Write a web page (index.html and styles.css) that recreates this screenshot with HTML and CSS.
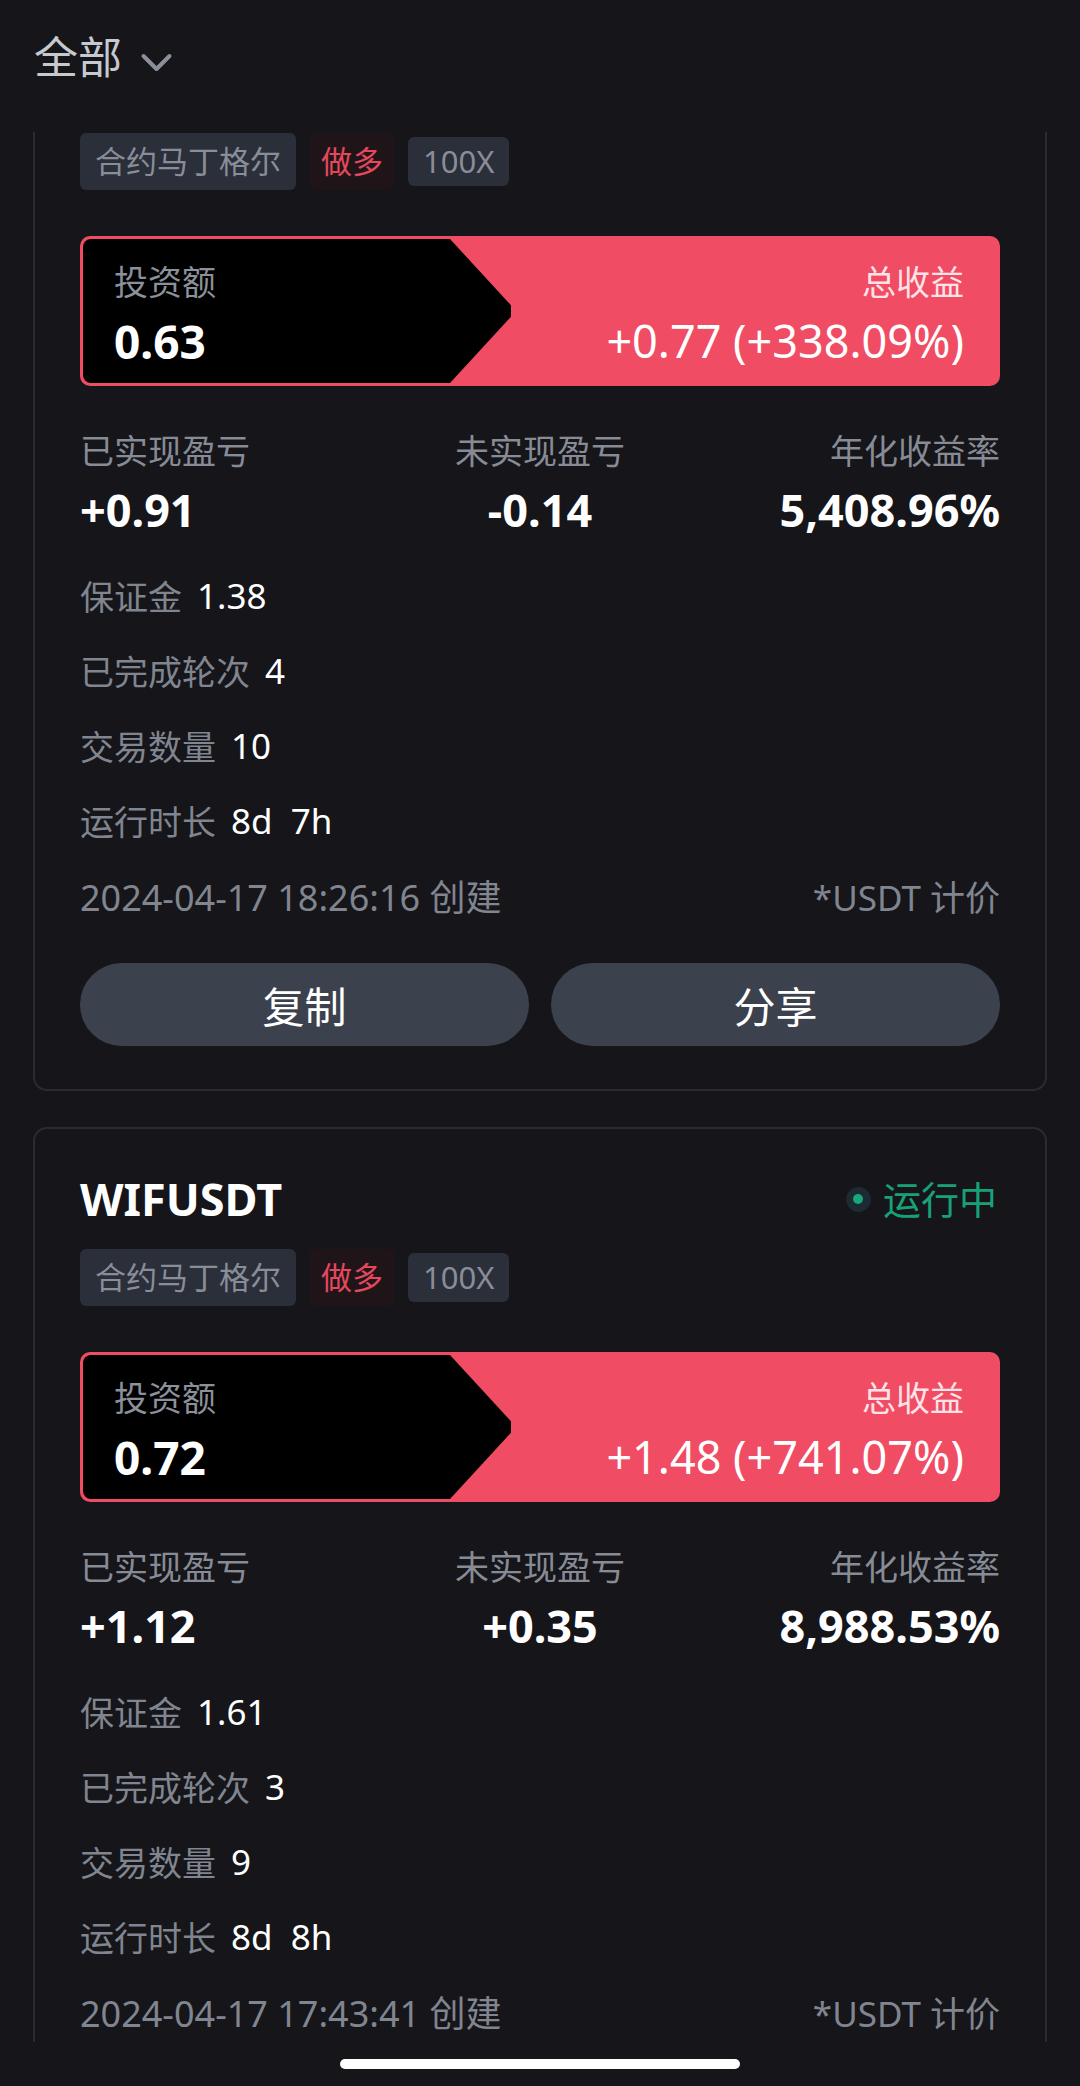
FILE: index.html
```html
<!DOCTYPE html>
<html lang="zh-CN">
<head>
<meta charset="utf-8">
<title>策略列表</title>
<link rel="stylesheet" href="styles.css">
</head>
<body>
<div class="screen">
  <header class="topbar">
    <span class="filter">全部</span>
    <svg class="chev" viewBox="0 0 32 20" aria-hidden="true"><polyline points="3,3 16,16 29,3" fill="none" stroke="#8b8f99" stroke-width="4" stroke-linecap="round" stroke-linejoin="round"/></svg>
  </header>

  <main class="list">
    <div class="list-inner">
      <section class="card card-scrolled">
        <div class="tags">
          <span class="tag">合约马丁格尔</span>
          <span class="tag tag-long">做多</span>
          <span class="tag tag-lev">100X</span>
        </div>
        <div class="pnl-box">
          <div class="invest">
            <div class="invest-label">投资额</div>
            <div class="invest-value">0.63</div>
          </div>
          <div class="profit">
            <div class="profit-label">总收益</div>
            <div class="profit-value">+0.77 (+338.09%)</div>
          </div>
        </div>
        <div class="stats">
          <div class="stat"><div class="stat-label">已实现盈亏</div><div class="stat-value">+0.91</div></div>
          <div class="stat"><div class="stat-label">未实现盈亏</div><div class="stat-value">-0.14</div></div>
          <div class="stat"><div class="stat-label">年化收益率</div><div class="stat-value">5,408.96%</div></div>
        </div>
        <div class="details">
          <div class="row"><span class="row-label">保证金</span><span class="row-value">1.38</span></div>
          <div class="row"><span class="row-label">已完成轮次</span><span class="row-value">4</span></div>
          <div class="row"><span class="row-label">交易数量</span><span class="row-value">10</span></div>
          <div class="row"><span class="row-label">运行时长</span><span class="row-value">8d&nbsp; 7h</span></div>
          <div class="row row-meta"><span class="created">2024-04-17 18:26:16 创建</span><span>*USDT 计价</span></div>
        </div>
        <div class="actions">
          <div class="btn">复制</div>
          <div class="btn">分享</div>
        </div>
      </section>

      <section class="card">
        <div class="card-head">
          <span class="pair">WIFUSDT</span>
          <span class="status"><i class="dot"></i>运行中</span>
        </div>
        <div class="tags">
          <span class="tag">合约马丁格尔</span>
          <span class="tag tag-long">做多</span>
          <span class="tag tag-lev">100X</span>
        </div>
        <div class="pnl-box">
          <div class="invest">
            <div class="invest-label">投资额</div>
            <div class="invest-value">0.72</div>
          </div>
          <div class="profit">
            <div class="profit-label">总收益</div>
            <div class="profit-value">+1.48 (+741.07%)</div>
          </div>
        </div>
        <div class="stats">
          <div class="stat"><div class="stat-label">已实现盈亏</div><div class="stat-value">+1.12</div></div>
          <div class="stat"><div class="stat-label">未实现盈亏</div><div class="stat-value">+0.35</div></div>
          <div class="stat"><div class="stat-label">年化收益率</div><div class="stat-value">8,988.53%</div></div>
        </div>
        <div class="details">
          <div class="row"><span class="row-label">保证金</span><span class="row-value">1.61</span></div>
          <div class="row"><span class="row-label">已完成轮次</span><span class="row-value">3</span></div>
          <div class="row"><span class="row-label">交易数量</span><span class="row-value">9</span></div>
          <div class="row"><span class="row-label">运行时长</span><span class="row-value">8d&nbsp; 8h</span></div>
          <div class="row row-meta"><span class="created">2024-04-17 17:43:41 创建</span><span>*USDT 计价</span></div>
        </div>
      </section>
    </div>
  </main>

  <footer class="homebar"><span class="indicator"></span></footer>
</div>
</body>
</html>
```

FILE: styles.css
```css
* { box-sizing: border-box; }

body {
  margin: 0;
  background: #15151a;
  font-family: "Noto Sans", "Noto Sans CJK SC", sans-serif;
}

.screen {
  width: 1080px;
  height: 2086px;
  display: flex;
  flex-direction: column;
  overflow: hidden;
  background: #15151a;
}

.topbar {
  height: 132px;
  flex: none;
  display: flex;
  align-items: flex-start;
  padding: 27px 0 0 34px;
}

.filter {
  font-size: 44px;
  line-height: 60px;
  color: #c6c9cf;
}

.chev {
  width: 33px;
  height: 20px;
  margin: 26px 0 0 18px;
}

.list {
  height: 1910px;
  flex: none;
  overflow: hidden;
  padding: 0 33px;
}

.list-inner {
  margin-top: -62px;
  display: flex;
  flex-direction: column;
  gap: 36px;
}

.card {
  border: 2px solid #2a2c35;
  border-radius: 14px;
  padding: 40px 45px 43px;
}

.card-head {
  height: 60px;
  margin-bottom: 20px;
  display: flex;
  justify-content: space-between;
  align-items: center;
}

.pair {
  font-size: 45px;
  font-weight: 700;
  line-height: 60px;
  color: #ffffff;
}

.status {
  display: flex;
  align-items: center;
  gap: 12px;
  font-size: 38px;
  line-height: 50px;
  color: #18a178;
  margin-right: 3px;
}

.dot {
  width: 25px;
  height: 25px;
  border-radius: 50%;
  background: #1c2a31;
  display: flex;
  align-items: center;
  justify-content: center;
}

.dot::after {
  content: "";
  width: 10px;
  height: 10px;
  border-radius: 50%;
  background: #17a77a;
}

.card-scrolled .tags {
  margin-top: 21px;
}

.tags {
  display: flex;
  align-items: center;
  gap: 13px;
}

.tag {
  font-size: 31px;
  line-height: 57px;
  padding: 0 15px;
  border-radius: 6px;
  background: #2b2f3a;
  color: #888d98;
}

.tag-long {
  background: #1f1519;
  color: #e4485d;
  padding: 0 12px;
}

.tag-lev {
  line-height: 49px;
  padding: 0 15px;
}

.pnl-box {
  margin-top: 46px;
  height: 150px;
  background: #f04c63;
  border-radius: 10px;
  padding: 3px;
  display: flex;
}

.invest {
  width: 430px;
  flex: none;
  background: #000000;
  border-radius: 8px 0 0 8px;
  clip-path: polygon(0 0, 367px 0, 428px 46%, 428px 54%, 367px 100%, 0 100%);
  padding: 20px 0 0 31px;
}

.invest-label {
  font-size: 34px;
  line-height: 46px;
  color: #8c909a;
}

.invest-value {
  font-size: 46px;
  font-weight: 700;
  line-height: 60px;
  margin-top: 6px;
  color: #ffffff;
}

.profit {
  flex: 1;
  text-align: right;
  padding: 20px 33px 0 0;
}

.profit-label {
  font-size: 34px;
  line-height: 46px;
  color: #fde3e7;
}

.profit-value {
  font-size: 45px;
  line-height: 60px;
  margin-top: 6px;
  color: #ffffff;
}

.stats {
  display: grid;
  grid-template-columns: 1fr 1fr 1fr;
  margin-top: 42px;
}

.stat:nth-child(2) { text-align: center; }
.stat:nth-child(3) { text-align: right; }

.stat-label {
  font-size: 34px;
  line-height: 46px;
  color: #878b95;
}

.stat-value {
  font-size: 45px;
  font-weight: 700;
  line-height: 60px;
  margin-top: 6px;
  color: #ffffff;
}

.details {
  margin-top: 18px;
}

.row {
  height: 75px;
  display: flex;
  align-items: center;
}

.row-label {
  font-size: 34px;
  color: #80858f;
}

.row-value {
  font-size: 35px;
  color: #ffffff;
  margin-left: 15px;
}

.row-meta {
  justify-content: space-between;
  font-size: 35px;
  color: #80858f;
}

.created {
  font-size: 36px;
}

.actions {
  display: flex;
  gap: 22px;
  margin-top: 30px;
}

.btn {
  flex: 1;
  height: 83px;
  border-radius: 42px;
  background: #3c414e;
  color: #ffffff;
  font-size: 42px;
  display: flex;
  align-items: center;
  justify-content: center;
}

.homebar {
  height: 44px;
  flex: none;
  display: flex;
  justify-content: center;
  padding-top: 17px;
  background: #15151a;
}

.indicator {
  width: 400px;
  height: 10px;
  border-radius: 5px;
  background: #ffffff;
}
```
